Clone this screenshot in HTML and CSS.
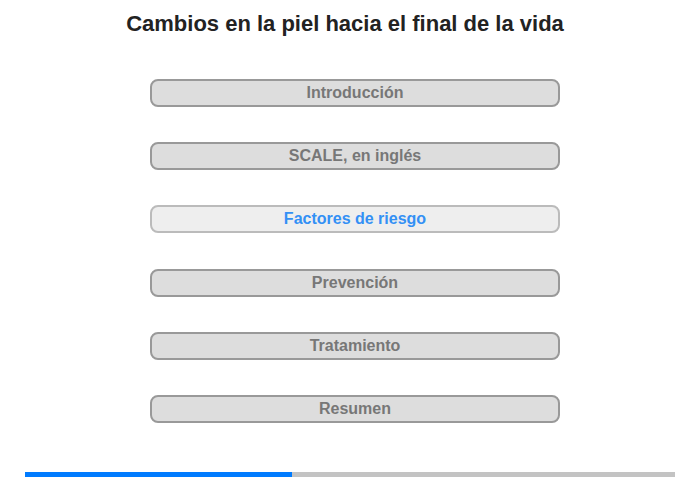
FILE: index.html
```html
<!DOCTYPE html>
<html lang="es">
<head>
    <meta charset="UTF-8">
    <meta name="viewport" content="width=device-width, initial-scale=1.0">
    <title>Cambios en la piel hacia el final de la vida</title>
    <link rel="stylesheet" href="styles.css">
</head>
<body>

    <div class="page">
        <h1>Cambios en la piel hacia el final de la vida</h1>

        <div class="menu">
            <button class="menu-item">Introducción</button>
            <button class="menu-item">SCALE, en inglés</button>
            <button class="menu-item active">Factores de riesgo</button>
            <button class="menu-item">Prevención</button>
            <button class="menu-item">Tratamiento</button>
            <button class="menu-item">Resumen</button>
        </div>

        <div class="progress">
            <div class="progress-fill" style="width: 41%"></div>
        </div>
    </div>

</body>
</html>
```

FILE: styles.css
```css
* {
    margin: 0;
    padding: 0;
    box-sizing: border-box;
}

body {
    font-family: "Liberation Sans", Arial, sans-serif;
    background-color: #fff;
}

.page {
    width: 700px;
    height: 480px;
    padding-top: 11px;
}

h1 {
    font-size: 22px;
    font-weight: bold;
    color: #222;
    text-align: center;
    line-height: 26px;
    padding-right: 10px;
}

.menu {
    display: flex;
    flex-direction: column;
    gap: 35.2px;
    width: 410px;
    margin: 42px 0 0 150px;
}

.menu-item {
    height: 28px;
    background-color: #ddd;
    border: 2px solid #999;
    border-radius: 8px;
    font-family: inherit;
    font-size: 16px;
    font-weight: bold;
    color: #777;
    cursor: pointer;
}

.menu-item.active {
    background-color: #eee;
    border-color: #bbb;
    color: #3390f5;
}

.progress {
    width: 650px;
    height: 5px;
    margin: 49px 0 0 25px;
    background-color: #c3c3c3;
}

.progress-fill {
    height: 100%;
    background-color: #007bff;
}
```
